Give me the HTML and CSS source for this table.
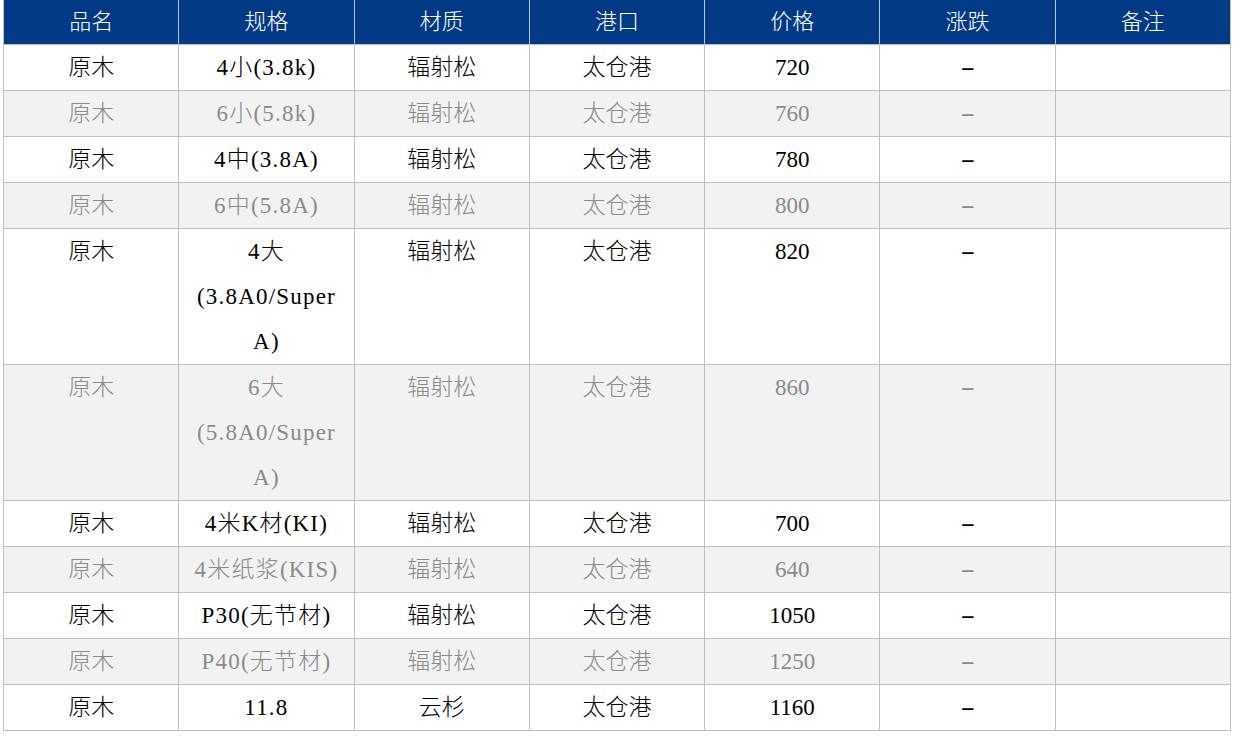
FILE: index.html
```html
<!DOCTYPE html>
<html lang="zh">
<head>
<meta charset="utf-8">
<title>原木价格</title>
<link rel="stylesheet" href="styles.css">
</head>
<body>
<div class="wrap">
<table class="price-table">
  <thead>
    <tr><th>品名</th><th>规格</th><th>材质</th><th>港口</th><th>价格</th><th>涨跌</th><th>备注</th></tr>
  </thead>
  <tbody>
    <tr><td>原木</td><td class="spec">4小(3.8k)</td><td>辐射松</td><td>太仓港</td><td>720</td><td><span class="dash">-</span></td><td></td></tr>
    <tr><td>原木</td><td class="spec">6小(5.8k)</td><td>辐射松</td><td>太仓港</td><td>760</td><td><span class="dash">-</span></td><td></td></tr>
    <tr><td>原木</td><td class="spec">4中(3.8A)</td><td>辐射松</td><td>太仓港</td><td>780</td><td><span class="dash">-</span></td><td></td></tr>
    <tr><td>原木</td><td class="spec">6中(5.8A)</td><td>辐射松</td><td>太仓港</td><td>800</td><td><span class="dash">-</span></td><td></td></tr>
    <tr><td>原木</td><td class="spec">4大<br>(3.8A0/Super<br>A)</td><td>辐射松</td><td>太仓港</td><td>820</td><td><span class="dash">-</span></td><td></td></tr>
    <tr><td>原木</td><td class="spec">6大<br>(5.8A0/Super<br>A)</td><td>辐射松</td><td>太仓港</td><td>860</td><td><span class="dash">-</span></td><td></td></tr>
    <tr><td>原木</td><td class="spec">4米K材(KI)</td><td>辐射松</td><td>太仓港</td><td>700</td><td><span class="dash">-</span></td><td></td></tr>
    <tr><td>原木</td><td class="spec">4米纸浆(KIS)</td><td>辐射松</td><td>太仓港</td><td>640</td><td><span class="dash">-</span></td><td></td></tr>
    <tr><td>原木</td><td class="spec">P30(无节材)</td><td>辐射松</td><td>太仓港</td><td>1050</td><td><span class="dash">-</span></td><td></td></tr>
    <tr><td>原木</td><td class="spec">P40(无节材)</td><td>辐射松</td><td>太仓港</td><td>1250</td><td><span class="dash">-</span></td><td></td></tr>
    <tr><td>原木</td><td class="spec">11.8</td><td>云杉</td><td>太仓港</td><td>1160</td><td><span class="dash">-</span></td><td></td></tr>
  </tbody>
</table>
</div>
</body>
</html>
```
FILE: styles.css
```css
html, body {
  margin: 0;
  padding: 0;
  background: #fff;
}
.wrap {
  padding: 0 0 0 3px;
}
.price-table {
  width: 1228px;
  table-layout: fixed;
  border-collapse: collapse;
  font-family: "Liberation Serif", "Noto Sans CJK SC", serif;
  font-size: 23px;
  font-weight: 300;
}
.price-table th {
  background: #023a86;
  color: #fff;
  font-weight: 300;
  font-size: 22px;
  height: 44px;
  line-height: 44px;
  padding: 0;
  text-align: center;
  border: 1px solid #c0c0c0;
  border-top: 0;
}
.price-table td {
  border: 1px solid #c0c0c0;
  padding: 0;
  line-height: 45px;
  height: 45px;
  text-align: center;
  vertical-align: top;
  color: #000;
  background: #fff;
}
.price-table td.spec {
  letter-spacing: 1.2px;
}
.dash {
  display: inline-block;
  transform: scaleX(1.9);
}
.price-table tbody tr:nth-child(even) td {
  background: #f2f2f2;
  color: #8a8a8a;
}
```
